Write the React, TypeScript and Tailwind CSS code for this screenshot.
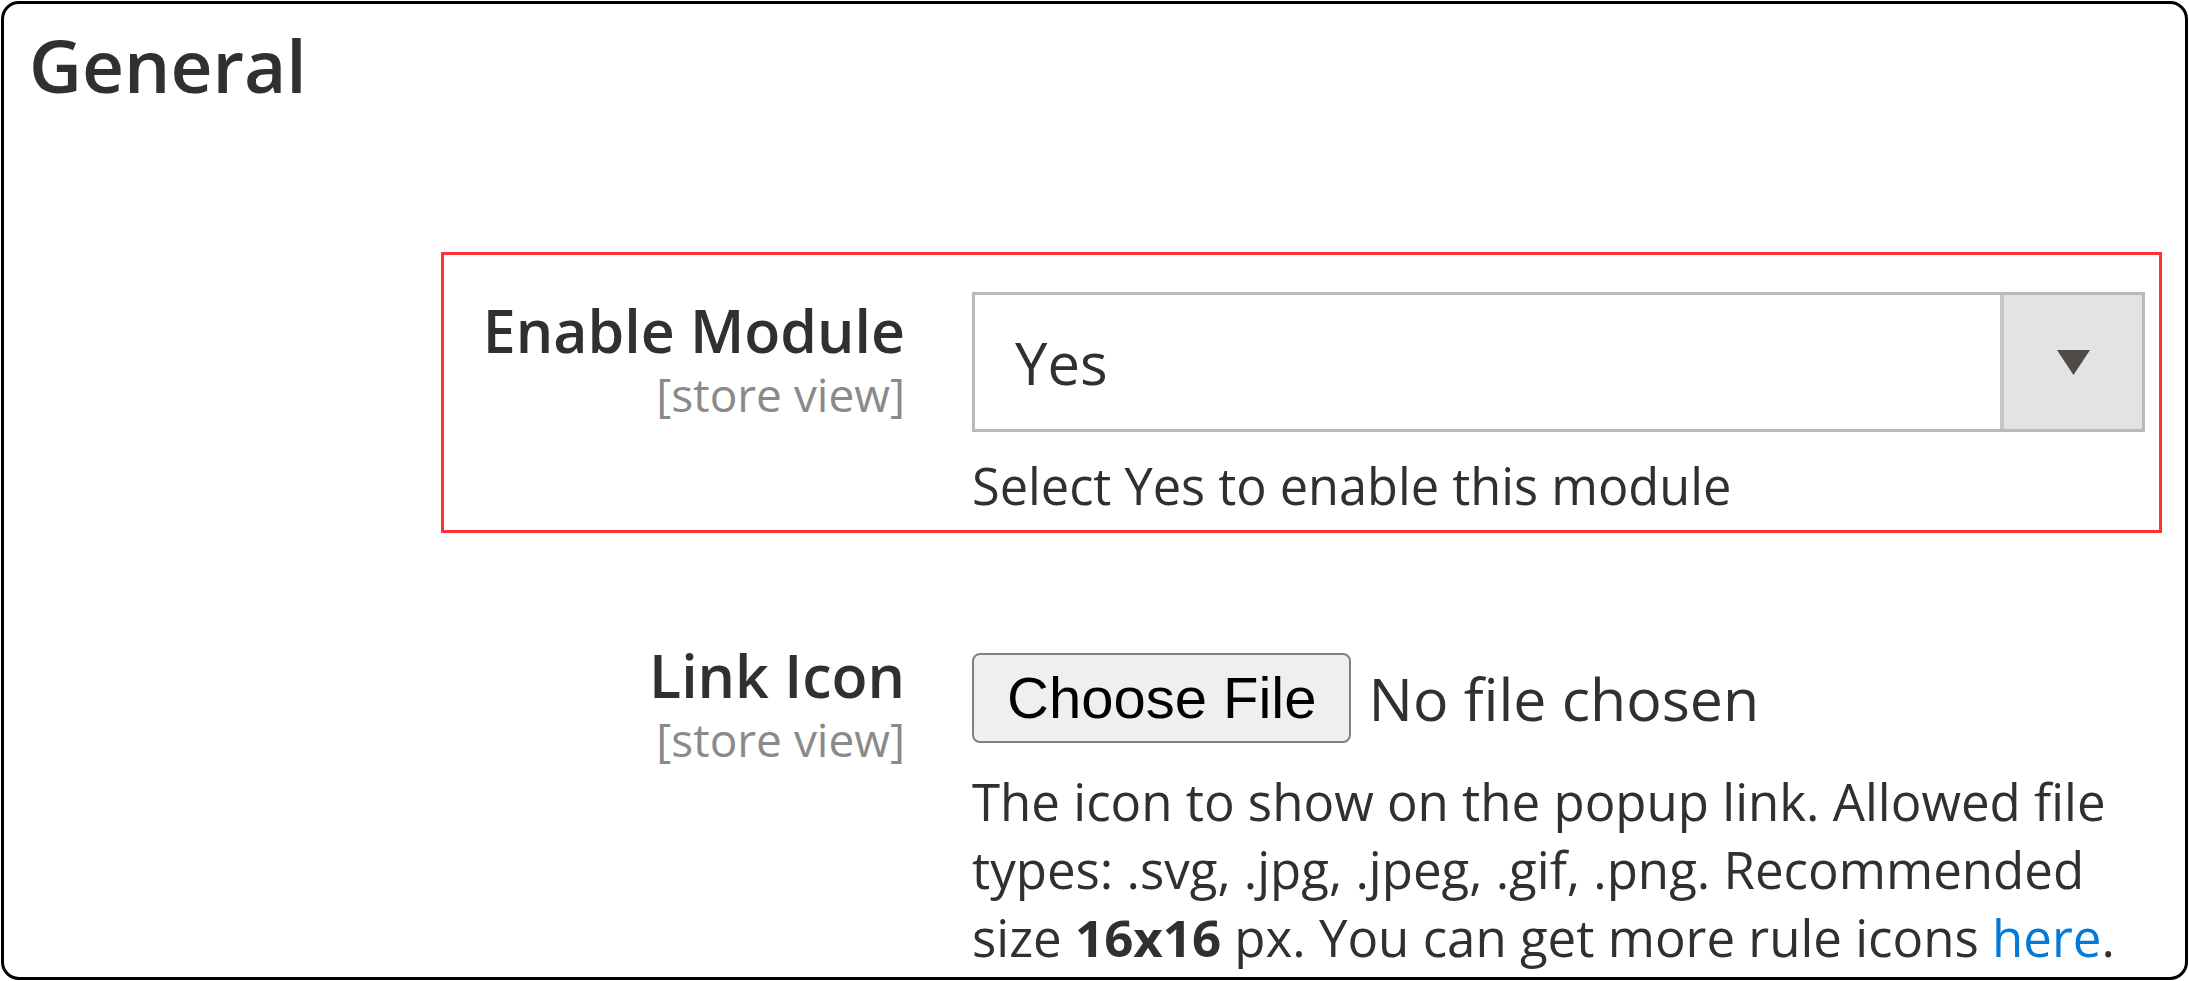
export default function App() {
  return (
    <div className="h-[981px] w-[2189px] bg-white p-px">
      <div className="flex h-full flex-col overflow-hidden rounded-[18px] border-[3px] border-black font-['Open_Sans',sans-serif] text-[#303030]">
        <h2 className="mt-[24px] pl-[25px] text-[73px] font-semibold leading-none">General</h2>

        {/* highlighted field */}
        <div className="mr-[23px] ml-[437px] mt-[151px] flex border-[3px] border-[#ff3333] pt-[37px] pr-[14px] pb-[10px]">
          <div className="w-[461px] shrink-0 text-right">
            <div className="text-[59px] font-semibold leading-[76px]">Enable Module</div>
            <div className="text-[46px] leading-[52px] text-[#8a8a8a]">[store view]</div>
          </div>
          <div className="ml-[67px] flex-1">
            <div className="flex h-[140px] border-[3px] border-[#b9b9b9] bg-white">
              <div className="flex flex-1 items-center pl-[40px] text-[58px]">Yes</div>
              <div className="flex w-[142px] items-center justify-center border-l-[4px] border-[#c6c6c6] bg-[#e3e3e3]">
                <svg width="33" height="25" viewBox="0 0 33 25">
                  <polygon points="0,0 33,0 16.5,25" fill="#514943" />
                </svg>
              </div>
            </div>
            <p className="mt-[20px] text-[50.5px] leading-[68px]">Select Yes to enable this module</p>
          </div>
        </div>

        <div className="mr-[40px] ml-[440px] mt-[104px] flex">
          <div className="w-[461px] shrink-0 text-right">
            <div className="text-[59px] font-semibold leading-[76px]">Link Icon</div>
            <div className="text-[46px] leading-[52px] text-[#8a8a8a]">[store view]</div>
          </div>
          <div className="ml-[67px] flex-1 pt-[16px]">
            <div className="flex items-center">
              <button className="h-[90px] rounded-[8px] border-2 border-[#808080] bg-[#efefef] px-[33px] font-['Liberation_Sans',Arial,sans-serif] text-[58px] leading-none text-black">
                Choose File
              </button>
              <span className="ml-[17px] text-[59px]">No file chosen</span>
            </div>
            <p className="mt-[24px] text-[51px] leading-[68px]">
              The icon to show on the popup link. Allowed file types: .svg, .jpg, .jpeg, .gif, .png. Recommended size{" "}
              <b className="font-bold">16x16</b> px. You can get more rule icons{" "}
              <a className="text-[#007bdb]" href="#">
                here
              </a>
              .
            </p>
          </div>
        </div>
      </div>
    </div>
  );
}
